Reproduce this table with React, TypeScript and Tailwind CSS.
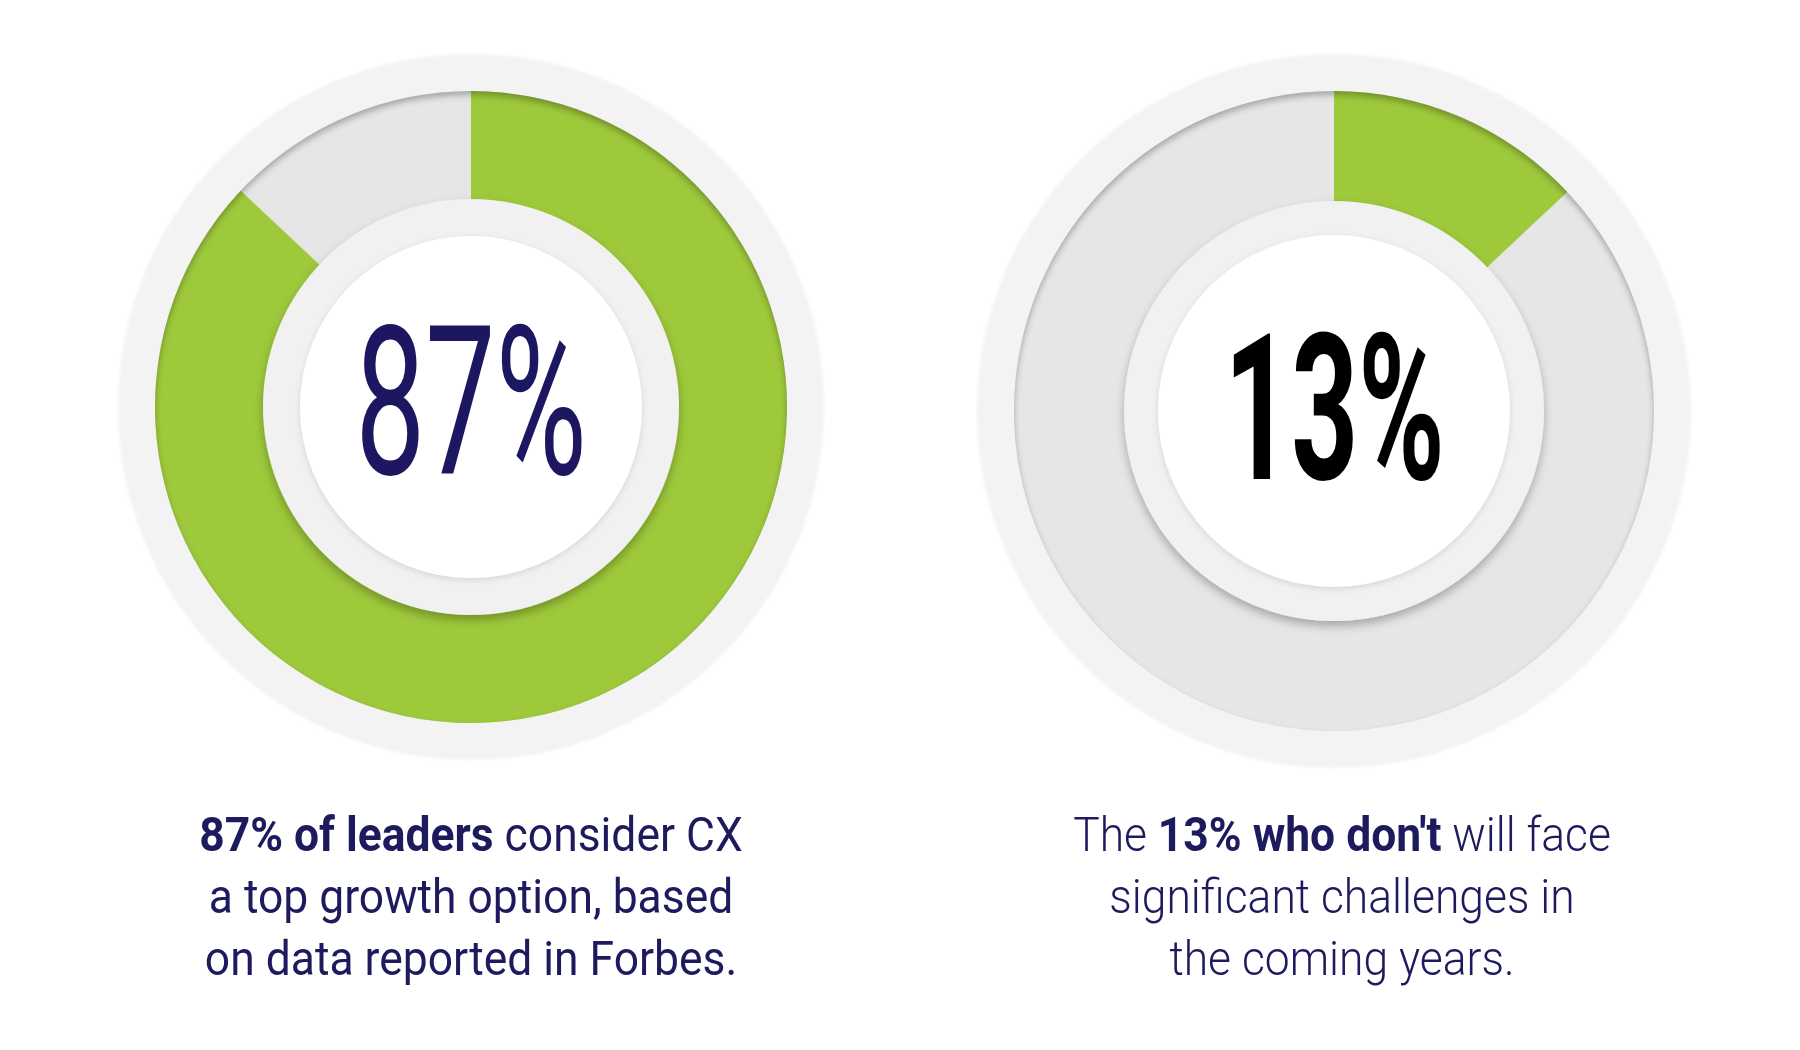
import React from "react";

type DonutProps = {
  id: string;
  size: number;
  halo: number;
  ring: number;
  inner: number;
  white: number;
  pct: number;
};

function wedge(c: number, R: number, pct: number) {
  const t = pct * 2 * Math.PI;
  const x = c + R * Math.sin(t);
  const y = c - R * Math.cos(t);
  const large = t > Math.PI ? 1 : 0;
  return `M ${c} ${c} L ${c} ${c - R} A ${R} ${R} 0 ${large} 1 ${x} ${y} Z`;
}

function Donut({ id, size, halo, ring, inner, white, pct }: DonutProps) {
  const c = size / 2;
  return (
    <svg width={size} height={size} viewBox={`0 0 ${size} ${size}`} className="block">
      <defs>
        <clipPath id={`${id}-clip`}>
          <circle cx={c} cy={c} r={ring} />
        </clipPath>
        <filter id={`${id}-blur`} x="-20%" y="-20%" width="140%" height="140%">
          <feGaussianBlur stdDeviation="3" />
        </filter>
        <filter id={`${id}-halo`} x="-20%" y="-20%" width="140%" height="140%">
          <feGaussianBlur stdDeviation="1.5" />
        </filter>
        <filter id={`${id}-drop`} x="-30%" y="-30%" width="160%" height="160%">
          <feDropShadow dx="0" dy="5" stdDeviation="5" floodColor="#000" floodOpacity="0.28" />
        </filter>
        <filter id={`${id}-drop2`} x="-30%" y="-30%" width="160%" height="160%">
          <feDropShadow dx="0" dy="2" stdDeviation="3" floodColor="#000" floodOpacity="0.12" />
        </filter>
      </defs>
      <circle cx={c} cy={c} r={halo - 1} fill="#f3f3f3" filter={`url(#${id}-halo)`} />
      <circle cx={c} cy={c} r={ring} fill="#e6e6e6" />
      <path d={wedge(c, ring, pct)} fill="#9ec93b" />
      <g clipPath={`url(#${id}-clip)`}>
        <circle
          cx={c}
          cy={c + 4}
          r={ring + 10}
          fill="none"
          stroke="#000"
          strokeOpacity="0.28"
          strokeWidth="20"
          filter={`url(#${id}-blur)`}
        />
      </g>
      <circle cx={c} cy={c} r={inner} fill="#f1f1f1" filter={`url(#${id}-drop)`} />
      <circle cx={c} cy={c} r={white} fill="#ffffff" filter={`url(#${id}-drop2)`} />
    </svg>
  );
}

export default function App() {
  return (
    <div className="w-[1800px] h-[1050px] bg-white overflow-hidden font-['Roboto',sans-serif]">
      <div className="flex items-start pl-[117px] pt-[53px] gap-[151px]">
        {/* Left column */}
        <div className="flex flex-col items-center w-[708px]">
          <div className="relative w-[708px] h-[708px]">
            <Donut id="d1" size={708} halo={354} ring={316} inner={208} white={171} pct={0.87} />
            <div className="absolute inset-0 flex items-center justify-center">
              <div className="text-[208px] leading-none font-normal text-[#1d1660] scale-x-[0.6] -translate-y-[4px] whitespace-nowrap">
                87%
              </div>
            </div>
          </div>
          <div className="mt-[43px] w-[708px] text-center text-[48px] leading-[62px] text-[#1e1a5e]">
            <div className="whitespace-nowrap scale-x-[0.925]">
              <span className="font-bold">87% of leaders</span> consider CX
            </div>
            <div className="whitespace-nowrap scale-x-[0.925]">a top growth option, based</div>
            <div className="whitespace-nowrap scale-x-[0.925]">on data reported in Forbes.</div>
          </div>
        </div>
        {/* Right column */}
        <div className="flex flex-col items-center w-[716px]">
          <div className="relative w-[716px] h-[716px]">
            <Donut id="d2" size={716} halo={358} ring={320} inner={210} white={176} pct={0.13} />
            <div className="absolute inset-0 flex items-center justify-center">
              <div className="text-[205px] leading-none font-bold text-black scale-x-[0.57] -translate-y-[2px] whitespace-nowrap">
                13%
              </div>
            </div>
          </div>
          <div className="mt-[35px] w-[716px] pl-[16px] text-center text-[48px] leading-[62px] font-light text-[#1e1a5e]">
            <div className="whitespace-nowrap scale-x-[0.925]">
              The <span className="font-bold">13% who don't</span> will face
            </div>
            <div className="whitespace-nowrap scale-x-[0.925]">significant challenges in</div>
            <div className="whitespace-nowrap scale-x-[0.925]">the coming years.</div>
          </div>
        </div>
      </div>
    </div>
  );
}
